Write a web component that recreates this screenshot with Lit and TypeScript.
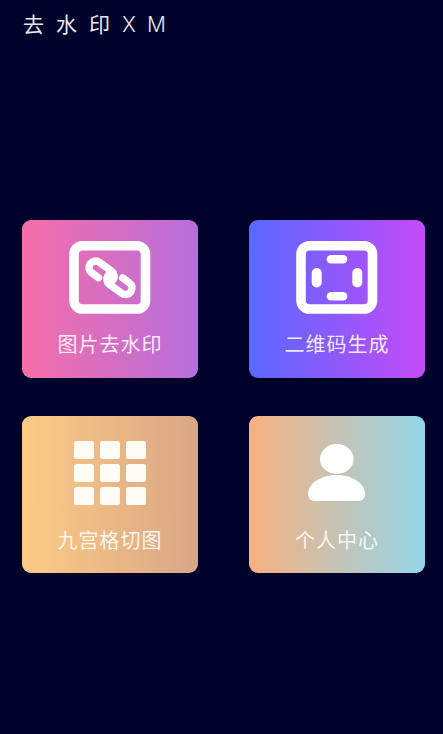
import { LitElement, html, svg, css } from "lit";
import { customElement } from "lit/decorators.js";

const frame = (inner: unknown) => html`<svg class="icon" width="82" height="73" viewBox="0 0 82 73">
  <rect x="5" y="4.7" width="71.5" height="63.3" rx="8.5" fill="none" stroke="#fff" stroke-width="9.6"/>${inner}</svg>`;

const linkIcon = frame(svg`<g fill="none" stroke="#fff" stroke-width="7.4" stroke-linecap="round" stroke-linejoin="round">
  <path d="M29.5 36.7 L22.7 31.8 A6.5 6.5 0 0 1 30.3 21.2 L42.45 30 A6.5 6.5 0 0 1 43.9 39.1"/>
  <path d="M53.5 36.8 L60.3 41.7 A6.5 6.5 0 0 1 52.7 52.3 L40.55 43.5 A6.5 6.5 0 0 1 39.1 34.4"/>
</g>`);

const scanIcon = frame(svg`<g fill="#fff">
  <rect x="30.7" y="14" width="20.6" height="8.6" rx="4.3"/>
  <rect x="30.7" y="50.9" width="20.6" height="8.6" rx="4.3"/>
  <rect x="15.7" y="27" width="10" height="19.4" rx="5"/>
  <rect x="56.3" y="27" width="10" height="19.4" rx="5"/>
</g>`);

const gridIcon = html`<div class="nine">${Array.from({ length: 9 }, () => html`<span></span>`)}</div>`;

const personIcon = html`<svg class="icon" width="58" height="58" viewBox="0 0 58 58">
  <ellipse cx="28.8" cy="15" rx="16.8" ry="15" fill="#fff"/>
  <path d="M28.5 31 C45 31 57 40 57 50 C57 54.5 54 57 50 57 L7 57 C3 57 0 54.5 0 50 C0 40 12 31 28.5 31 Z" fill="#fff"/>
</svg>`;

const cards = [
  { label: "图片去水印", cls: "pink", icon: linkIcon },
  { label: "二维码生成", cls: "violet", icon: scanIcon },
  { label: "九宫格切图", cls: "sand", icon: gridIcon },
  { label: "个人中心", cls: "sky", icon: personIcon },
];

@customElement("app-root")
export class AppRoot extends LitElement {
  static styles = css`
    :host {
      display: block;
      height: 734px;
      background: #00022b;
      font-family: "Noto Sans CJK SC", "Noto Sans", sans-serif;
      color: #fff;
      overflow: hidden;
    }
    .title {
      height: 220px;
      box-sizing: border-box;
      padding: 8px 0 0 23px;
      font-size: 21px;
      line-height: 30px;
      letter-spacing: 12px;
      white-space: nowrap;
      color: #e8e8f2;
      font-weight: 400;
    }
    .latin {
      font-family: "Inter", sans-serif;
      font-weight: 300;
      letter-spacing: 11px;
    }
    .grid {
      display: grid;
      grid-template-columns: 176px 176px;
      grid-auto-rows: 157.5px;
      column-gap: 51px;
      row-gap: 38px;
      padding-left: 22px;
    }
    .card {
      border-radius: 9px;
      display: flex;
      flex-direction: column;
      align-items: center;
    }
    .slot {
      height: 74px;
      margin-top: 21px;
      display: flex;
      align-items: flex-start;
      justify-content: center;
    }
    .label {
      margin-top: 14px;
      font-size: 20px;
      line-height: 30px;
      letter-spacing: 1px;
      font-weight: 400;
      color: rgba(255, 255, 255, 0.88);
    }
    .pink { background: linear-gradient(90deg, #f56ea8, #b56fdc); }
    .violet { background: linear-gradient(90deg, #5968ff, #c44bf7); }
    .sand { background: linear-gradient(90deg, #fdcb85, #d8a686); }
    .sky { background: linear-gradient(90deg, #f7b080, #94d6e9); }
    .icon { display: block; }
    .nine {
      display: grid;
      grid-template-columns: repeat(3, 20.5px);
      grid-template-rows: repeat(3, 18.5px);
      column-gap: 5.5px;
      row-gap: 4.5px;
      margin-top: 4px;
    }
    .nine span { background: #fffcf6; border-radius: 2.5px; }
    .sky .slot { margin-top: 28.5px; height: 66.5px; }
  `;

  render() {
    return html`
      <div class="title">去水印<span class="latin">XM</span></div>
      <div class="grid">
        ${cards.map(
          (c) => html`<div class="card ${c.cls}">
            <div class="slot">${c.icon}</div>
            <div class="label">${c.label}</div>
          </div>`
        )}
      </div>
    `;
  }
}
